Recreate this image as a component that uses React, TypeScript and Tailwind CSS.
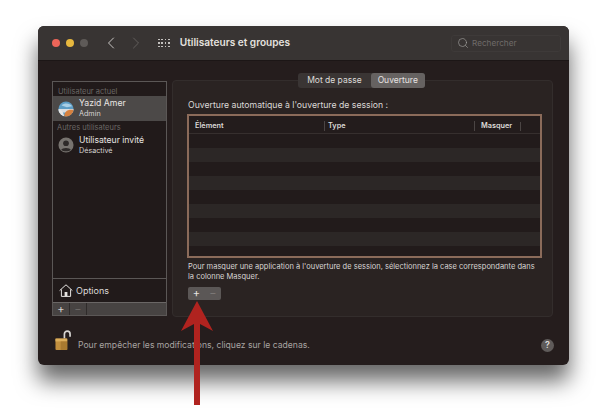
import { ChevronLeft, ChevronRight, Search } from "lucide-react";

const font = { fontFamily: "Inter, 'Liberation Sans', sans-serif" };

function Avatar() {
  return (
    <svg width="16" height="16" viewBox="0 0 18 18" className="shrink-0">
      <defs>
        <clipPath id="av">
          <circle cx="9" cy="9" r="8.5" />
        </clipPath>
      </defs>
      <g clipPath="url(#av)">
        <rect width="18" height="18" fill="#5d9cc4" />
        <rect y="9" width="18" height="4" fill="#d9dde0" />
        <path d="M7 18 C7 12 10 9 18 10 L18 18 Z" fill="#d6813f" />
        <path d="M0 10 C3 9 6 11 7 18 L0 18 Z" fill="#e8e6e4" />
        <path d="M4 5 C7 2 13 2 16 6 L10 7 Z" fill="#a9cfe6" />
      </g>
    </svg>
  );
}

function GuestAvatar() {
  return (
    <svg width="16" height="16" viewBox="0 0 18 18" className="shrink-0">
      <circle cx="9" cy="9" r="8.5" fill="#77736f" />
      <circle cx="9" cy="7" r="3.2" fill="#2e2a29" />
      <path d="M3.5 14.5 C4.5 11.5 13.5 11.5 14.5 14.5 C12 16.6 6 16.6 3.5 14.5 Z" fill="#2e2a29" />
    </svg>
  );
}

function HomeIcon() {
  return (
    <svg width="14" height="13" viewBox="0 0 14 13" fill="none" stroke="#e6e3e1" strokeWidth="1">
      <path d="M0.6 6.6 L7 0.8 L13.4 6.6" />
      <path d="M2.4 5.4 V12.4 H11.6 V5.4" />
      <rect x="5.6" y="8" width="2.8" height="4.4" fill="#e6e3e1" stroke="none" />
    </svg>
  );
}

function Lock() {
  return (
    <svg width="16" height="22" viewBox="0 0 17 23" fill="none" className="mt-[1px] shrink-0">
      <path d="M10 10 V5 C10 1 16 1 16 5 V8" stroke="#d8d5d2" strokeWidth="1.8" />
      <rect x="0.5" y="10" width="12.5" height="12" rx="1" fill="#c28f3e" />
      <rect x="0.5" y="10" width="12.5" height="3" fill="#dcae5c" />
      <rect x="6" y="13" width="7" height="9" fill="#a97a30" />
    </svg>
  );
}

function Arrow() {
  return (
    <svg width="34" height="104" viewBox="0 0 34 104" className="absolute left-[180px] top-[301px]">
      <path d="M17 0 L33 30 L20 23 L20 104 L14 104 L14 23 L1 30 Z" fill="#b0231f" />
    </svg>
  );
}

const rows = [0, 1, 2, 3, 4, 5, 6, 7, 8];

export default function App() {
  return (
    <div className="relative h-[416px] w-[606px] overflow-hidden bg-white pl-[38px] pt-[26px]" style={font}>
      <div className="flex h-[339px] w-[531px] flex-col overflow-hidden rounded-[6px] bg-[#251d1d] shadow-[0_16px_22px_rgba(0,0,0,0.6)]">
        <div className="flex h-[35px] shrink-0 items-center border-b border-[#1c1616] bg-[#383433] pl-[14px] pr-[8px]">
          <div className="flex gap-[6px]">
            <span className="h-[8px] w-[8px] rounded-full bg-[#ec6559]" />
            <span className="h-[8px] w-[8px] rounded-full bg-[#e6b73e]" />
            <span className="h-[8px] w-[8px] rounded-full bg-[#5e5a58]" />
          </div>
          <ChevronLeft size={20} strokeWidth={1.2} className="ml-[13px] text-[#c9c6c4]" />
          <ChevronRight size={20} strokeWidth={1.2} className="ml-[5px] text-[#625e5c]" />
          <div className="ml-[12px] grid grid-cols-4 gap-[1.7px]">
            {Array.from({ length: 12 }).map((_, i) => (
              <span key={i} className="h-[1.7px] w-[1.7px] bg-[#c4c1bf]" />
            ))}
          </div>
          <span className="ml-[10px] text-[10.1px] font-semibold text-[#e4e1df]">Utilisateurs et groupes</span>
          <div className="ml-auto flex h-[17px] w-[110px] items-center gap-[3px] rounded-[3px] border border-[#3e3a39] pl-[5px]">
            <Search size={12} strokeWidth={1.3} className="text-[#a3a09e]" />
            <span className="text-[8.2px] text-[#6f6b69]">Rechercher</span>
          </div>
        </div>

        <div className="flex flex-1 flex-col px-[14px] pt-[19px]">
          <div className="flex gap-[5px]">
            <div className="mt-[1px] flex h-[235px] w-[115px] shrink-0 flex-col border border-[#5b5756] bg-[#211a1a]">
              <div className="flex h-[14px] items-end pl-[5px] text-[7.5px] leading-[9px] text-[#6b6765]">Utilisateur actuel</div>
              <div className="flex h-[25px] items-center gap-[5px] bg-[#4c4948] pl-[5px]">
                <Avatar />
                <div className="flex flex-col">
                  <span className="text-[8.7px] leading-[11px] text-[#e8e5e3]">Yazid Amer</span>
                  <span className="text-[7.2px] leading-[10px] text-[#d8d5d3]">Admin</span>
                </div>
              </div>
              <div className="flex h-[11px] items-end pl-[4px] text-[7.5px] leading-[9px] text-[#6b6765]">Autres utilisateurs</div>
              <div className="flex h-[26px] items-center gap-[5px] pl-[5px]">
                <GuestAvatar />
                <div className="flex flex-col">
                  <span className="text-[8.6px] leading-[11px] text-[#e8e5e3]">Utilisateur invité</span>
                  <span className="text-[7.2px] leading-[10px] text-[#d8d5d3]">Désactivé</span>
                </div>
              </div>
              <div className="mt-auto flex h-[24px] items-center gap-[3px] border-t border-[#5b5756] pl-[6px]">
                <HomeIcon />
                <span className="text-[9px] text-[#dedbd9]">Options</span>
              </div>
              <div className="flex h-[13px] items-center border-t border-[#6a6665] bg-[#474342] text-[#d6d3d1]">
                <span className="flex h-full w-[17px] items-center justify-center border-r border-[#2f2b2a] text-[11px] leading-none">+</span>
                <span className="flex h-full w-[17px] items-center justify-center border-r border-[#2f2b2a] text-[11px] leading-none text-[#6b6765]">−</span>
              </div>
            </div>

            <div className="flex h-[237px] w-[381px] flex-col rounded-[4px] border border-[#332d2c] bg-[#2a2322] px-[14px]">
              <div className="-mt-[8px] flex justify-center pr-[2px]">
                <div className="flex h-[15px] items-center rounded-[3px] bg-[#3a3534] text-[8.5px] text-[#dedbd9]">
                  <span className="px-[9px]">Mot de passe</span>
                  <span className="flex h-full items-center rounded-[3px] bg-[#666261] px-[7px] text-[#e6e3e1]">Ouverture</span>
                </div>
              </div>
              <div className="ml-[1px] mt-[11px] text-[8.7px] leading-[12px] text-[#dcd9d7]">Ouverture automatique à l'ouverture de session :</div>
              <div className="mt-[3px] flex h-[144px] w-[355px] flex-col overflow-hidden border-2 border-[#8b6b5a] bg-[#231c1c]">
                <div className="flex h-[18px] shrink-0 items-center border-b border-[#362f2e] pt-[3px] text-[7.3px] font-semibold text-[#dcd9d7]">
                  <span className="w-[135px] pl-[6px]">Élément</span>
                  <span className="w-[150px] border-l border-[#4b4544] pl-[3px]">Type</span>
                  <span className="w-[46px] border-l border-[#4b4544] pl-[6px]">Masquer</span>
                  <span className="h-[9px] border-l border-[#4b4544]" />
                </div>
                {rows.map((r) => (
                  <div key={r} className={r % 2 === 0 ? "h-[14px] shrink-0 bg-[#221b1b]" : "h-[14px] shrink-0 bg-[#2c2726]"} />
                ))}
              </div>
              <p className="ml-[1px] mt-[4px] text-[7.5px] leading-[10px] text-[#d8d5d3]">
                Pour masquer une application à l'ouverture de session, sélectionnez la case correspondante dans la colonne Masquer.
              </p>
              <div className="ml-[1px] mt-[5px] flex h-[13px] w-[33px] items-center rounded-[2px] bg-[#5b5756] text-[11px] leading-none">
                <span className="flex h-full w-[17px] items-center justify-center text-[#e6e3e1]">+</span>
                <span className="flex h-full w-[16px] items-center justify-center text-[#7c7876]">−</span>
              </div>
            </div>
          </div>

          <div className="mt-[10px] flex h-[24px] items-center pl-[3px]">
            <Lock />
            <span className="ml-[7px] mt-[12px] text-[8.6px] text-[#a8a4a2]">Pour empêcher les modifications, cliquez sur le cadenas.</span>
            <span className="ml-auto mr-[1px] mt-[12px] flex h-[13px] w-[13px] items-center justify-center rounded-full bg-[#5f5b5a] text-[9px] font-semibold text-[#dedbd9]">?</span>
          </div>
        </div>
      </div>
      <Arrow />
    </div>
  );
}
